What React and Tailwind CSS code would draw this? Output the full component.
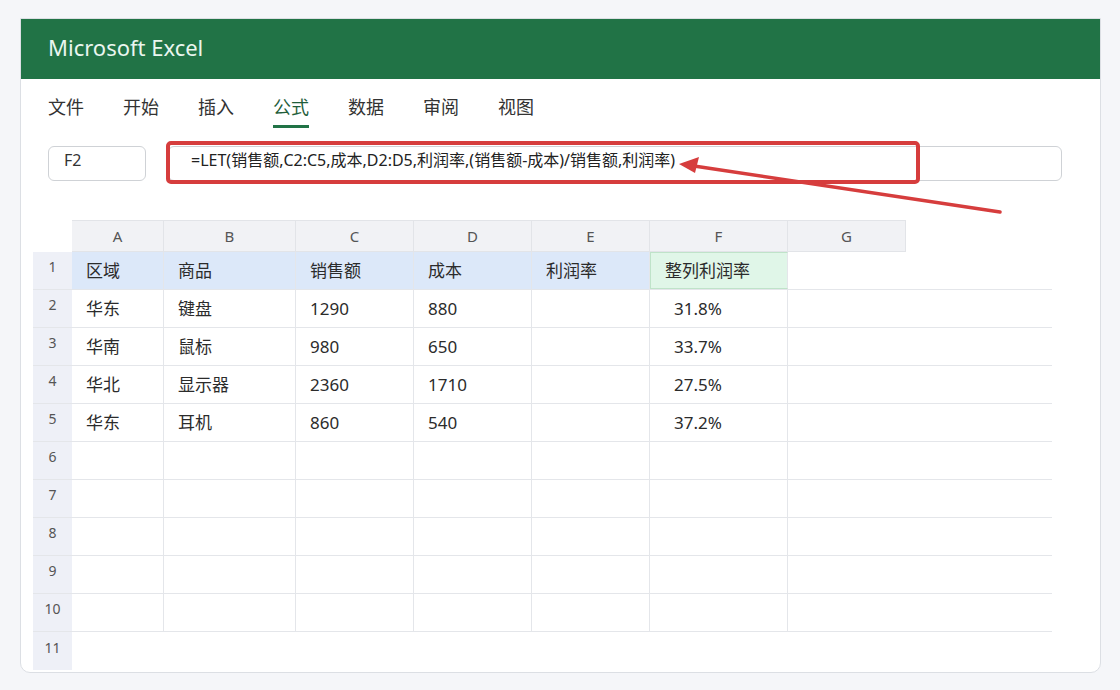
import React from "react";

const font = { fontFamily: '"Noto Sans", "Noto Sans CJK SC", sans-serif' };

const tabs = ["文件", "开始", "插入", "公式", "数据", "审阅", "视图"];
const cols = [
  { key: "A", w: "w-[92px]" },
  { key: "B", w: "w-[132px]" },
  { key: "C", w: "w-[118px]" },
  { key: "D", w: "w-[118px]" },
  { key: "E", w: "w-[118px]" },
  { key: "F", w: "w-[138px]" },
];

const rows = [
  ["区域", "商品", "销售额", "成本", "利润率", "整列利润率"],
  ["华东", "键盘", "1290", "880", "", "31.8%"],
  ["华南", "鼠标", "980", "650", "", "33.7%"],
  ["华北", "显示器", "2360", "1710", "", "27.5%"],
  ["华东", "耳机", "860", "540", "", "37.2%"],
  ["", "", "", "", "", ""],
  ["", "", "", "", "", ""],
  ["", "", "", "", "", ""],
  ["", "", "", "", "", ""],
  ["", "", "", "", "", ""],
];

function Cell({ col, value, rowIdx, colIdx }) {
  const header = rowIdx === 0;
  let bg = "bg-white";
  if (header && colIdx < 5) bg = "bg-[#dce8f9]";
  if (header && colIdx === 5) bg = "bg-[#e0f6e8] border border-[#bfe3c9]";
  const pad = !header && colIdx === 5 ? "pl-[24px]" : "pl-[14px]";
  return (
    <div
      className={`${col.w} h-full flex items-center ${pad} ${bg} border-r border-r-[#e4e6ea] text-[17px] text-[#2b2b2b] shrink-0`}
    >
      {value}
    </div>
  );
}

export default function App() {
  return (
    <div className="relative w-[1120px] h-[690px] bg-[#f5f6f9] pt-[18px] pl-[20px] overflow-hidden" style={font}>
      <div className="w-[1081px] h-[655px] bg-white border border-[#dcdfe4] rounded-b-[10px] overflow-hidden">
        {/* title bar */}
        <div className="h-[60px] bg-[#217346] flex items-center pl-[27px] pb-[4px]">
          <span className="text-[22px] text-[#eaf6ef]">Microsoft Excel</span>
        </div>

        {/* ribbon tabs */}
        <div className="flex gap-[39px] pl-[27px] pt-[16px]">
          {tabs.map((t) => (
            <div
              key={t}
              className={`text-[18px] leading-[25px] pb-[5px] border-b-[3px] ${
                t === "公式" ? "border-[#217346] text-[#1f5e3b]" : "border-transparent text-[#333]"
              }`}
            >
              {t}
            </div>
          ))}
        </div>

        {/* name box + formula bar */}
        <div className="flex gap-[22px] pl-[27px] mt-[18px]">
          <div className="w-[98px] h-[35px] border border-[#cfd2d6] rounded-[6px] pl-[15px] pt-[1px] text-[16px] text-[#333]">
            F2
          </div>
          <div className="w-[894px] h-[35px] border border-[#cfd2d6] rounded-[6px] pl-[22px] pt-[1px] text-[16px] text-[#222]">
            =LET(销售额,C2:C5,成本,D2:D5,利润率,(销售额-成本)/销售额,利润率)
          </div>
        </div>

        {/* grid */}
        <div className="ml-[12px] mt-[39px]">
          {/* column headers */}
          <div className="flex h-[32px] pl-[39px]">
            <div className="flex bg-[#f1f2f5] border-y border-[#e2e4e8]">
              {[...cols, { key: "G", w: "w-[118px]" }].map((c) => (
                <div
                  key={c.key}
                  className={`${c.w} flex items-center justify-center border-r border-[#e2e4e8] text-[15px] text-[#555]`}
                >
                  {c.key}
                </div>
              ))}
            </div>
          </div>

          {rows.map((r, i) => (
            <div key={i} className="flex h-[38px] w-[1019px] border-b border-[#e4e6ea]">
              <div className="w-[39px] shrink-0 h-full bg-[#eef0f7] flex items-center justify-center text-[14px] text-[#555] pb-[8px]">
                {i + 1}
              </div>
              {cols.map((c, j) => (
                <Cell key={c.key} col={c} value={r[j]} rowIdx={i} colIdx={j} />
              ))}
              <div className="flex-1" />
            </div>
          ))}
          <div className="flex h-[38px] w-[1019px]">
            <div className="w-[39px] h-full bg-[#eef0f7] flex items-center justify-center text-[14px] text-[#555] pb-[8px]">
              11
            </div>
          </div>
        </div>
      </div>

      {/* annotation: red highlight + arrow */}
      <div className="absolute left-[166px] top-[141px] w-[754px] h-[43px] border-[4px] border-[#d63d3d] rounded-[5px] pointer-events-none" />
      <svg className="absolute left-0 top-0 pointer-events-none" width="1120" height="690">
        <line x1="1000" y1="212" x2="694" y2="166" stroke="#d63d3d" strokeWidth="3.5" strokeLinecap="round" />
        <polygon points="679,164 699,157 695,173" fill="#d63d3d" />
      </svg>
    </div>
  );
}
